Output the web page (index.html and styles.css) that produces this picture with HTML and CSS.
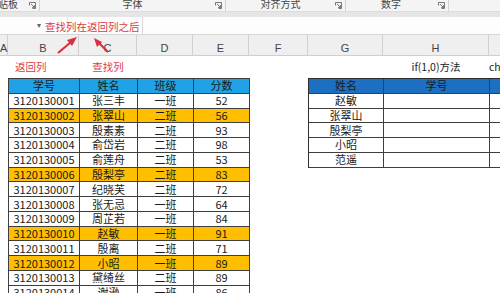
FILE: index.html
```html
<!DOCTYPE html>
<html lang="zh-CN">
<head>
<meta charset="utf-8">
<link rel="stylesheet" href="styles.css">
</head>
<body>
<div class="app">
  <div class="ribbon">
    <div class="grp g-clip"><span class="glabel clipcut">剪贴板</span><svg class="launch" viewBox="0 0 7 7"><path d="M0.5 3.5V0.5H6.5V6.5H3.5" /><path d="M2 2L5.5 5.5M5.5 3.2V5.5H3.2" /></svg></div>
    <div class="grp g-font"><span class="glabel">字体</span><svg class="launch" viewBox="0 0 7 7"><path d="M0.5 3.5V0.5H6.5V6.5H3.5" /><path d="M2 2L5.5 5.5M5.5 3.2V5.5H3.2" /></svg></div>
    <div class="grp g-align"><span class="glabel">对齐方式</span><svg class="launch" viewBox="0 0 7 7"><path d="M0.5 3.5V0.5H6.5V6.5H3.5" /><path d="M2 2L5.5 5.5M5.5 3.2V5.5H3.2" /></svg></div>
    <div class="grp g-num"><span class="glabel">数字</span><svg class="launch" viewBox="0 0 7 7"><path d="M0.5 3.5V0.5H6.5V6.5H3.5" /><path d="M2 2L5.5 5.5M5.5 3.2V5.5H3.2" /></svg></div>
    <div class="grp g-rest"></div>
  </div>
  <div class="band"></div>
  <div class="fbar">
    <div class="namebox"><span class="dd">▾</span></div>
    <div class="fxarea"></div>
    <div class="finput"></div>
  </div>
  <div class="colhdr">
    <div class="colh">A</div>
    <div class="colh">B</div>
    <div class="colh">C</div>
    <div class="colh">D</div>
    <div class="colh">E</div>
    <div class="colh">F</div>
    <div class="colh">G</div>
    <div class="colh">H</div>
    <div class="colh"></div>
  </div>
  <div class="sheet">
    <div class="labels">
      <div></div>
      <div class="red left">返回列</div>
      <div class="red">查找列</div>
      <div></div><div></div><div></div><div></div>
      <div class="plain">if(1,0)方法</div>
      <div class="plain left">choose方法</div>
    </div>
    <div class="tables">
      <div class="tbl tbl-left">
        <div class="th">学号</div><div class="th">姓名</div><div class="th">班级</div><div class="th">分数</div>
        <div>3120130001</div><div>张三丰</div><div>一班</div><div>52</div>
        <div class="hl">3120130002</div><div class="hl">张翠山</div><div class="hl">二班</div><div class="hl">56</div>
        <div>3120130003</div><div>殷素素</div><div>二班</div><div>93</div>
        <div>3120130004</div><div>俞岱岩</div><div>二班</div><div>98</div>
        <div>3120130005</div><div>俞莲舟</div><div>二班</div><div>53</div>
        <div class="hl">3120130006</div><div class="hl">殷梨亭</div><div class="hl">二班</div><div class="hl">83</div>
        <div>3120130007</div><div>纪晓芙</div><div>二班</div><div>72</div>
        <div>3120130008</div><div>张无忌</div><div>一班</div><div>64</div>
        <div>3120130009</div><div>周芷若</div><div>一班</div><div>84</div>
        <div class="hl">3120130010</div><div class="hl">赵敏</div><div class="hl">一班</div><div class="hl">91</div>
        <div>3120130011</div><div>殷离</div><div>二班</div><div>71</div>
        <div class="hl">3120130012</div><div class="hl">小昭</div><div class="hl">一班</div><div class="hl">89</div>
        <div>3120130013</div><div>黛绮丝</div><div>二班</div><div>89</div>
        <div>3120130014</div><div>谢逊</div><div>一班</div><div>86</div>
      </div>
      <div class="tbl tbl-right">
        <div class="th2">姓名</div><div class="th2">学号</div><div class="th2">班级</div>
        <div>赵敏</div><div></div><div></div>
        <div>张翠山</div><div></div><div></div>
        <div>殷梨亭</div><div></div><div></div>
        <div>小昭</div><div></div><div></div>
        <div>范遥</div><div></div><div></div>
      </div>
    </div>
  </div>
  <div class="note">查找列在返回列之后</div>
  <svg class="arrows" viewBox="0 0 500 293">
    <line x1="58" y1="53" x2="71" y2="42" />
    <polygon points="77,37 67,40 72,46" />
    <line x1="108" y1="52" x2="99" y2="43" />
    <polygon points="94,38 97,47 102,42" />
  </svg>
</div>
</body>
</html>
```
FILE: styles.css
```css
* { box-sizing: border-box; }
html, body { margin: 0; padding: 0; }
body {
  width: 500px;
  height: 293px;
  overflow: hidden;
  background: #ffffff;
  font-family: "Noto Sans CJK SC", "Noto Sans", sans-serif;
}
.app {
  position: relative;
  width: 500px;
  height: 293px;
  overflow: hidden;
}
.ribbon {
  height: 11px;
  display: flex;
  background: #f4f4f4;
  overflow: hidden;
}
.grp {
  position: relative;
  display: flex;
  align-items: flex-end;
  justify-content: center;
  border-right: 1px solid #d2d2d2;
  height: 11px;
}
.g-clip { width: 40px; justify-content: flex-start; }
.g-font { width: 186px; }
.g-align { width: 120px; }
.g-num { width: 103px; }
.g-rest { flex: 1; border-right: none; }
.glabel {
  font-size: 10px;
  line-height: 14px;
  color: #444;
  white-space: nowrap;
}
.clipcut { margin-left: -12px; }
.g-align .glabel { margin-right: 10px; }
.g-num .glabel { margin-right: 12px; }
.launch {
  position: absolute;
  right: 3px;
  top: 2px;
  width: 7px;
  height: 7px;
  fill: none;
  stroke: #6a6a6a;
  stroke-width: 0.9;
}
.band {
  height: 6px;
  background: #e6e6e6;
  border-top: 1px solid #dcdcdc;
}
.fbar {
  height: 18px;
  display: flex;
  background: #fdfdfd;
  border-bottom: 1px solid #d6d6d6;
}
.namebox {
  width: 68px;
  border-right: 1px solid #e0e0e0;
  position: relative;
}
.dd {
  position: absolute;
  left: 37px;
  top: 2px;
  font-size: 8px;
  color: #666;
}
.fxarea {
  width: 75px;
  border-right: 1px solid #dadada;
}
.finput { flex: 1; }
.colhdr {
  height: 21px;
  display: grid;
  grid-template-columns: 8px 71px 58px 56px 56px 59px 75px 106px 80px;
  background: #efefef;
  border-bottom: 1px solid #cfcfcf;
}
.colh {
  display: flex;
  align-items: flex-end;
  justify-content: center;
  padding-bottom: 0;
  font-family: "Liberation Sans", "Noto Sans", sans-serif;
  font-size: 11px;
  line-height: 13px;
  color: #444;
  border-right: 1px solid #d0d0d0;
}
.colh:first-child { justify-content: flex-start; }
.sheet {
  width: 600px;
}
.labels {
  height: 22px;
  display: grid;
  grid-template-columns: 8px 71px 58px 56px 56px 59px 75px 106px 80px;
  align-items: center;
  font-size: 10.5px;
  line-height: 14px;
}
.labels > div { text-align: center; white-space: nowrap; }
.labels > div:last-child { overflow: hidden; }
.labels .left { text-align: left; }
.labels .red.left { padding-left: 7px; }
.red { color: #dd3a48; }
.plain { color: #222; }
.tables {
  display: flex;
  align-items: flex-start;
}
.tbl {
  display: grid;
  grid-auto-rows: 14.77px;
  border-left: 1px solid #3e3e3e;
  border-top: 1px solid #3e3e3e;
  font-size: 11px;
  color: #1a1a1a;
}
.tbl > div {
  border-right: 1px solid #3e3e3e;
  border-bottom: 1px solid #3e3e3e;
  display: flex;
  align-items: center;
  justify-content: center;
  line-height: 13px;
  white-space: nowrap;
}
.tbl-left {
  margin-left: 8px;
  grid-template-columns: 71px 58px 56px 56px;
}
.tbl-right {
  margin-left: 58px;
  grid-template-columns: 75px 106px 80px;
  border-color: #2e2e2e;
}
.th { background: #1fa2e6; }
.th2 { background: #1d6fc2; color: #1a1a1a; }
.hl { background: #ffbf00; }
.note {
  position: absolute;
  left: 45px;
  top: 20px;
  font-size: 10.5px;
  line-height: 14px;
  color: #d93a47;
  white-space: nowrap;
}
.arrows {
  position: absolute;
  left: 0;
  top: 0;
  width: 500px;
  height: 293px;
  pointer-events: none;
}
.arrows line { stroke: #d8313e; stroke-width: 2.2; }
.arrows polygon { fill: #d8313e; }
```
